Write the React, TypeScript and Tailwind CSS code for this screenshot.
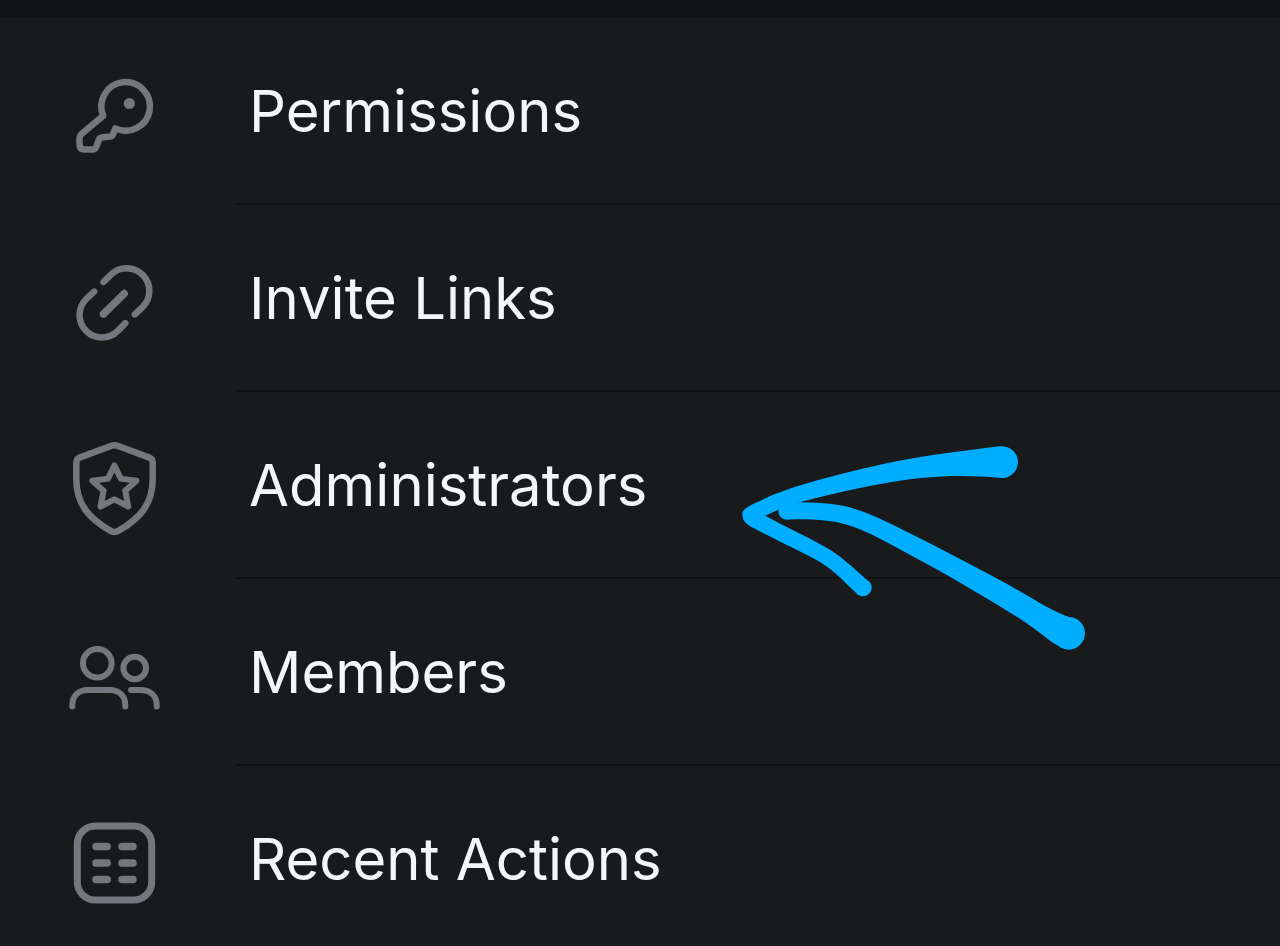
import type { ReactNode } from "react";

const KeyIcon = () => (
  <>
    <path
      strokeWidth={6.5}
      d="M43.2 57.7 A24.3 24.3 0 1 1 55.3 70.4 L53 76.5 Q52.3 78.5 50.3 78.6 L41.5 79.5 Q39.8 79.7 39.2 81 L36.3 88.8 Q35.3 91.5 32 91.5 H24.5 Q19.5 91.5 19.5 86.5 V80 Q19.5 77.8 21.5 76 Z"
    />
    <circle cx={69.3} cy={45.5} r={5.6} fill="currentColor" stroke="none" />
  </>
);

const LinkIcon = () => (
  <g strokeWidth={6.5}>
    <path d="M43.5 37 L50.8 29.7 A22.7 22.7 0 0 1 82.9 61.8 L74.8 69.3" />
    <path d="M34.2 46.7 L26.1 54.2 A22.4 22.4 0 0 0 57.8 85.9 L65.3 78.3" />
    <path strokeWidth={7.5} d="M43.5 69 L64.2 48.6" />
  </g>
);

const ShieldIcon = () => (
  <>
    <path
      strokeWidth={6.5}
      d="M51.5 13.8 Q54.5 12.6 57.5 13.8 L89.5 25.6 Q92.6 27 92.7 30.5 V47 C92.7 73 79 87 58.5 98.8 Q54.5 101 50.5 98.8 C30 87 16.3 73 16.3 47 V30.5 Q16.4 27 19.5 25.6 Z"
    />
    <path
      strokeWidth={6}
      d="M54.4 33.5 L60.8 46.6 L76.5 48.7 L65.2 58.7 L68.3 74.5 L54.4 67.3 L40.5 74.5 L43.6 58.7 L32.3 48.7 L48 46.6 Z"
    />
  </>
);

const MembersIcon = () => (
  <g strokeWidth={6}>
    <circle cx={37.3} cy={44.3} r={14.3} />
    <circle cx={74.7} cy={49} r={11.3} />
    <path d="M12.3 87.5 V86 C12.3 77 18.5 71 28 71 H49.5 C59 71 65.3 77 65.3 86 V87.5" />
    <path d="M71 71 H80.5 C90.5 71 96.7 77 96.7 86 V87.5" />
  </g>
);

const ActionsIcon = () => (
  <>
    <rect x={17.3} y={20} width={74.4} height={74} rx={18} strokeWidth={7} />
    <path
      strokeWidth={7.5}
      d="M36 40.5 H47.2 M62 40.5 H73 M36 57 H47.2 M62 57 H73 M36 73.5 H47.2 M62 73.5 H73"
    />
  </>
);

const rows: { label: string; icon: ReactNode; marked?: boolean }[] = [
  { label: "Permissions", icon: <KeyIcon /> },
  { label: "Invite Links", icon: <LinkIcon /> },
  { label: "Administrators", icon: <ShieldIcon />, marked: true },
  { label: "Members", icon: <MembersIcon /> },
  { label: "Recent Actions", icon: <ActionsIcon /> },
];

// Hand-drawn arrow that points at a row label
function Arrow() {
  return (
    <svg
      viewBox="0 0 1110 690"
      className="pointer-events-none absolute top-[38px] left-[730px] z-10 w-[370px] fill-[#00aeff]"
      aria-hidden="true"
    >
      <path d="M810 49 C690 64 580 76 470 100 C350 127 200 163 110 203 C65 224 37 234 37 252 C37 273 50 284 72 295 C150 336 210 362 270 396 C322 428 345 460 378 488 A26 26 0 1 0 410 449 C370 413 330 376 290 353 C230 318 160 288 106 257 L150 237 L208 217 C280 199 350 181 430 166 C590 135 700 134 812 144 A48 48 0 0 0 864 96 A48 48 0 0 0 810 49 Z" />
      <path d="M150 230 C138 247 150 269 172 269 C250 266 310 270 370 290 C430 312 500 353 580 396 C690 456 800 522 880 573 C925 602 955 632 985 648 A49 49 0 1 0 1018 561 C975 549 900 500 830 461 C720 401 600 340 490 285 C420 250 370 233 330 226 C290 219 250 217 208 217 Z" />
    </svg>
  );
}

export default function App() {
  return (
    <main className="min-h-screen overflow-hidden bg-[#191a1c] font-['Inter',sans-serif] text-[#f5f6f7]">
      <div className="h-[18px] bg-[#111315]" />
      <ul>
        {rows.map((row) => (
          <li key={row.label} className="relative">
            <button type="button" className="flex w-full items-stretch text-left">
              <svg
                viewBox="0 0 110 110"
                className="mt-10 mr-[66px] ml-[60px] size-[110px] shrink-0 text-[#74777b]"
                fill="none"
                stroke="currentColor"
                strokeLinecap="round"
                strokeLinejoin="round"
                aria-hidden="true"
              >
                {row.icon}
              </svg>
              <span className="flex h-[187px] flex-1 items-center border-b-2 border-[#101113] pt-0.5 pl-[13px] text-[58px]">
                {row.label}
              </span>
            </button>
            {row.marked && <Arrow />}
          </li>
        ))}
      </ul>
    </main>
  );
}
